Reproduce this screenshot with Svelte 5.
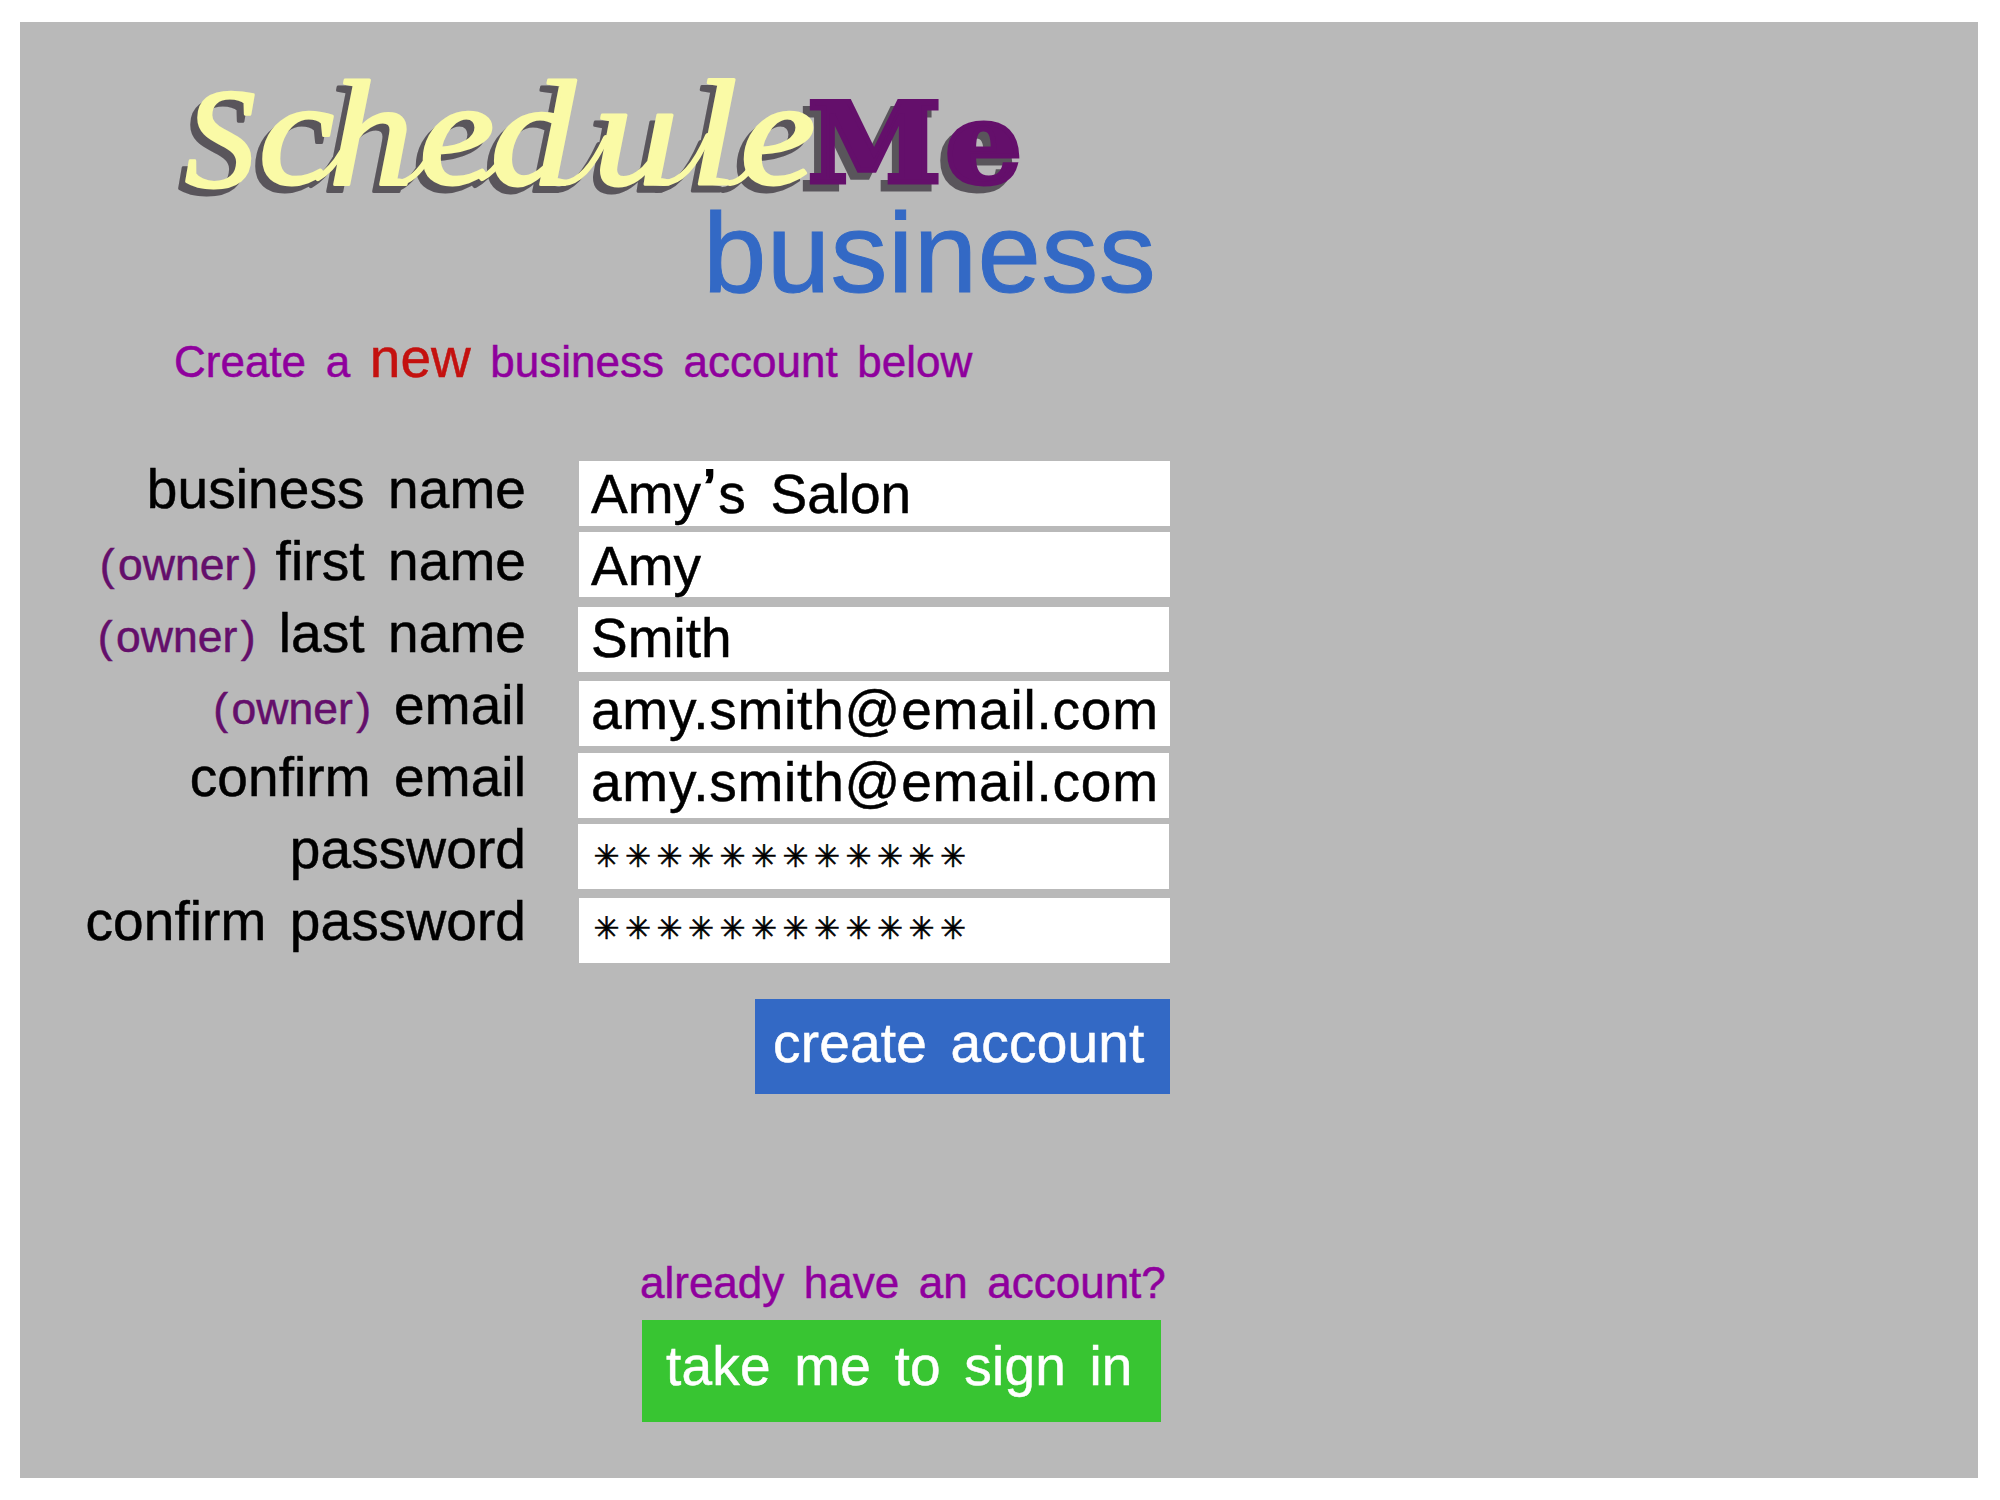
<script>
  const rows = [
    { label: 'business name', value: 'Amy’s Salon' },
    { owner: true, label: 'first name', value: 'Amy' },
    { owner: true, label: 'last name', value: 'Smith' },
    { owner: true, label: 'email', value: 'amy.smith@email.com' },
    { label: 'confirm email', value: 'amy.smith@email.com' },
    { label: 'password', secret: true },
    { label: 'confirm password', secret: true }
  ];
  const mask = Array.from({ length: 12 });
  const pieces = (text) => text.split(/(’)/);
</script>

<main class="panel">
  <header>
    <svg class="logo" width="1100" height="174" viewBox="20 22 1100 174" role="img" aria-label="ScheduleMe">
      <g class="shaded">
        <!-- pen strokes that join the script letters -->
        <path class="joins" d="M318 178C328 172 335 164 342 152M398 183C410 182 420 172 430 155M482 178C490 174 496 168 502 158M564 183C580 182 594 164 606 138M664 183C682 182 696 164 708 136M730 183C740 182 748 174 756 160" />
        <text class="script initial" x="185" y="187">S</text>
        <text class="script" transform="scale(1.13 1)" y="184" x="229 291 371 434 525 611 655">chedule</text>
        <text class="slab" transform="scale(1.1 1)" y="182" x="734 859">Me</text>
      </g>
    </svg>
    <div class="edition">business</div>
  </header>

  <p class="tagline">Create a <em>new</em> business account below</p>

  <form>
    <div class="labels">
      {#each rows as row}
        <div class="label">
          {#if row.owner}<span class="owner">(<span class="role">owner</span>)</span>{/if}
          <span>{row.label}</span>
        </div>
      {/each}
    </div>
    <div class="fields">
      {#each rows as row}
        <div class="field" class:secret={row.secret}>
          {#if row.secret}
            {#each mask as _}<span class="star">✳</span>{/each}
          {:else}
            <span class:mail={row.value.includes('@')}>{#each pieces(row.value) as piece}<span class:quote={piece === '’'}>{piece}</span>{/each}</span>
          {/if}
        </div>
      {/each}
    </div>
  </form>

  <div class="create">create account</div>
  <p class="already">already have an account?</p>
  <div class="signin">take me to sign in</div>
</main>

<style>
  :global(body) { background: #fff; }
  :global(#app) { display: flow-root; }
  .panel {
    box-sizing: border-box;
    width: 1958px;
    height: 1456px;
    margin: 22px 0 0 20px;
    background: #b9b9b9;
    font-family: "Liberation Sans", Arial, sans-serif;
    font-size: 55px;
    color: #000;
    display: flex;
    flex-direction: column;
    align-items: flex-start;
    white-space: nowrap;
    word-spacing: 8px;
    -webkit-text-stroke: 0.5px currentColor;
  }
  .logo { display: block; overflow: visible; -webkit-text-stroke: 0; }
  .shaded { filter: drop-shadow(-7px 7px 0 #59555b); }
  .joins {
    fill: none;
    stroke: #fafaa6;
    stroke-width: 6px;
    stroke-linecap: round;
  }
  .script {
    font: italic 150px "Liberation Serif", serif;
    fill: #fafaa6;
    stroke: #fafaa6;
    stroke-width: 3px;
    stroke-linejoin: round;
  }
  .initial { font-size: 141px; }
  .slab {
    font: bold 110px "DejaVu Serif", serif;
    fill: #640f6b;
    stroke: #640f6b;
    stroke-width: 5px;
  }
  .edition {
    margin-left: 683px;
    height: 114px;
    font-size: 114px;
    line-height: 114px;
    letter-spacing: 0.4px;
    color: #3369c5;
    -webkit-text-stroke-width: 1px;
  }
  p { margin: 0; }
  .tagline {
    margin: 16px 0 0 154px;
    height: 72px;
    line-height: 72px;
    font-size: 44px;
    word-spacing: 7.4px;
    color: #8f009d;
  }
  .tagline em { font-style: normal; font-size: 55px; line-height: 1px; color: #c4110f; }
  form { display: flex; margin-top: 55px; height: 510px; }
  .labels { width: 506px; letter-spacing: 0.1px; }
  .label {
    height: 72px;
    line-height: 72px;
    display: flex;
    justify-content: flex-end;
    align-items: baseline;
    gap: 23px;
  }
  .label:nth-child(2) { gap: 18px; }
  .owner { font-size: 44.5px; color: #640f6b; letter-spacing: 0; }
  .role { margin: 0 3.5px; }
  .fields { width: 591px; margin-left: 53px; padding-top: 8px; }
  .field {
    box-sizing: border-box;
    width: 591px;
    height: 65px;
    padding-left: 12px;
    background: #fff;
    line-height: 66px;
    margin-bottom: 6px;
  }
  .field:nth-child(1) { word-spacing: 9.5px; }
  .field:nth-child(2) { line-height: 68px; margin-bottom: 10px; }
  .field:nth-child(3) { line-height: 62px; margin-bottom: 9px; }
  .field:nth-child(4) { line-height: 58px; margin-bottom: 7px; }
  .field:nth-child(5) { line-height: 58px; }
  .field:nth-child(6) { margin-bottom: 9px; }
  .field:nth-child(3), .field:nth-child(5), .field:nth-child(6) { margin-left: -1px; padding-left: 13px; }
  .mail { letter-spacing: 0.78px; }
  .quote { margin: 0 2.5px; vertical-align: 5px; line-height: 1px; -webkit-text-stroke-width: 2px; }
  .secret { display: flex; }
  .star {
    width: 31.5px;
    text-align: center;
    font: 31px "DejaVu Sans", sans-serif;
    line-height: 64px;
    -webkit-text-stroke-width: 0.6px;
  }
  .field:nth-child(7) .star { line-height: 60px; }
  .create, .signin { color: #fff; box-sizing: border-box; letter-spacing: 0.2px; }
  .create {
    margin: 36px 0 0 735px;
    width: 415px;
    height: 95px;
    padding-left: 18px;
    line-height: 88px;
    background: #3369c5;
  }
  .already {
    margin: 154px 0 0 620px;
    height: 72px;
    line-height: 70px;
    font-size: 44px;
    word-spacing: 7.3px;
    color: #8f009d;
  }
  .signin {
    width: 519px;
    height: 102px;
    margin-left: 622px;
    padding-left: 24px;
    line-height: 92px;
    background: #38c532;
  }
</style>
